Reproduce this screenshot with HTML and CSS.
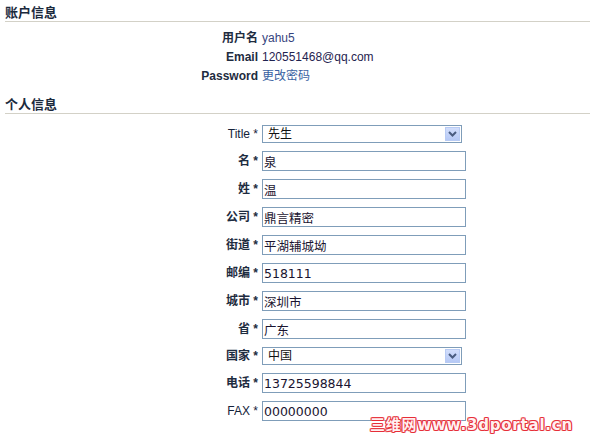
FILE: index.html
```html
<!DOCTYPE html>
<html lang="zh">
<head>
<meta charset="utf-8">
<title>账户信息</title>
<link rel="stylesheet" href="styles.css">
</head>
<body>
<div class="page">
  <h2 class="section-title">账户信息</h2>
  <dl class="info">
    <div class="info-row"><dt>用户名</dt><dd class="val-user">yahu5</dd></div>
    <div class="info-row"><dt>Email</dt><dd class="val-mail">120551468@qq.com</dd></div>
    <div class="info-row"><dt>Password</dt><dd><a class="val-link" href="#">更改密码</a></dd></div>
  </dl>

  <h2 class="section-title section-title-2">个人信息</h2>
  <form class="form">
    <div class="form-row row-select">
      <label class="plain">Title *</label>
      <span class="select-wrap">
        <select class="select"><option>先生</option></select>
        <span class="select-btn"><svg width="9" height="6" viewBox="0 0 9 6"><path d="M1 1 L4.5 4.5 L8 1" fill="none" stroke="#4a5c80" stroke-width="2"/></svg></span>
      </span>
    </div>
    <div class="form-row"><label>名 *</label><input class="field" type="text" value="泉"></div>
    <div class="form-row"><label>姓 *</label><input class="field" type="text" value="温"></div>
    <div class="form-row"><label>公司 *</label><input class="field" type="text" value="鼎言精密"></div>
    <div class="form-row"><label>街道 *</label><input class="field" type="text" value="平湖辅城坳"></div>
    <div class="form-row"><label>邮编 *</label><input class="field" type="text" value="518111"></div>
    <div class="form-row"><label>城市 *</label><input class="field" type="text" value="深圳市"></div>
    <div class="form-row"><label>省 *</label><input class="field" type="text" value="广东"></div>
    <div class="form-row row-select">
      <label>国家 *</label>
      <span class="select-wrap">
        <select class="select"><option>中国</option></select>
        <span class="select-btn"><svg width="9" height="6" viewBox="0 0 9 6"><path d="M1 1 L4.5 4.5 L8 1" fill="none" stroke="#4a5c80" stroke-width="2"/></svg></span>
      </span>
    </div>
    <div class="form-row"><label>电话 *</label><input class="field" type="text" value="13725598844"></div>
    <div class="form-row"><label class="plain">FAX *</label><input class="field" type="text" value="00000000"></div>
  </form>

  <div class="watermark">三维网www.3dportal.cn</div>
</div>
</body>
</html>
```

FILE: styles.css
```css
html, body {
  margin: 0;
  padding: 0;
  background: #ffffff;
}

body {
  font-family: "Liberation Sans", Arial, "Noto Sans CJK SC", sans-serif;
  font-size: 12px;
  color: #1e2c40;
}

.page {
  position: relative;
  min-height: 439px;
}

.section-title {
  margin: 0 0 0 5px;
  padding: 5px 0 1px;
  font-size: 13px;
  line-height: 15px;
  font-weight: bold;
  color: #1b2a3d;
  border-bottom: 1px solid #d3d1c7;
}

.section-title-2 {
  margin-top: 6px;
}

.info {
  margin: 7px 0 0;
}

.info-row {
  display: grid;
  grid-template-columns: 258px 1fr;
  column-gap: 4px;
  line-height: 19px;
}

.info-row dt {
  text-align: right;
  font-weight: bold;
}

.info-row dd {
  margin: 0;
}

.val-user {
  color: #36447e;
}

.val-mail {
  color: #1f2350;
}

.val-link {
  color: #3a62a2;
  text-decoration: none;
}

.form {
  margin: 7px 0 0;
}

.form-row {
  display: grid;
  grid-template-columns: 258px auto;
  column-gap: 4px;
  align-items: center;
  padding: 4px 0;
}

.form-row label {
  text-align: right;
  font-weight: bold;
  line-height: 16px;
}

.form-row label.plain {
  font-weight: normal;
  color: #14223a;
}

.field {
  box-sizing: border-box;
  width: 204px;
  height: 20px;
  margin: 0;
  padding: 0 1px;
  border: 1px solid #7f9db9;
  border-radius: 0;
  outline: none;
  background: #fff;
  font-family: "DejaVu Sans", Verdana, "Noto Sans CJK SC", sans-serif;
  font-size: 12.5px;
  color: #1a1430;
}

.select-wrap {
  position: relative;
  display: block;
  width: 200px;
  height: 18px;
}

.select {
  -webkit-appearance: none;
  appearance: none;
  box-sizing: border-box;
  display: block;
  width: 200px;
  height: 18px;
  margin: 0;
  padding: 0 0 0 5px;
  border: 1px solid #7f9db9;
  border-radius: 0;
  background: #fff;
  font-family: "Liberation Sans", Arial, "Noto Sans CJK SC", sans-serif;
  font-size: 12px;
  color: #111;
  outline: none;
}

.select-btn {
  position: absolute;
  top: 2px;
  right: 2px;
  width: 15px;
  height: 14px;
  box-sizing: border-box;
  border: 1px solid #b8cbf4;
  background: linear-gradient(#d2defc, #b6c9f6);
  display: flex;
  align-items: center;
  justify-content: center;
  pointer-events: none;
}

.watermark {
  position: absolute;
  left: 370px;
  top: 417px;
  font-family: "DejaVu Sans", Verdana, "Noto Sans CJK SC", sans-serif;
  font-weight: bold;
  font-size: 15px;
  letter-spacing: 0.8px;
  line-height: 16px;
  white-space: nowrap;
  color: #fff0f0;
  text-shadow: 1px 0 0 #e62e38, -1px 0 0 #e62e38, 0 1px 0 #e62e38, 0 -1px 0 #e62e38,
    1px 1px 0 #ee6a72, -1px -1px 0 #ee6a72, 1px -1px 0 #ee6a72, -1px 1px 0 #ee6a72;
}
```
